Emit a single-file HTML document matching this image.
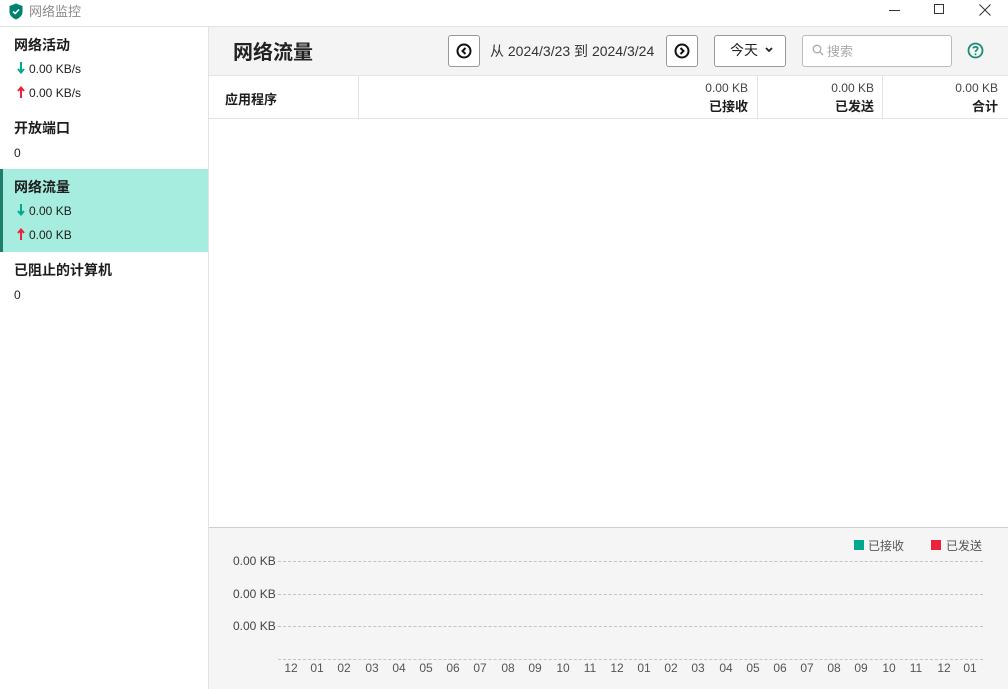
<!DOCTYPE html>
<html><head><meta charset="utf-8"><style>
*{margin:0;padding:0;box-sizing:border-box}
body{width:1008px;height:689px;overflow:hidden;background:#fff;font-family:"Liberation Sans","Noto Sans CJK SC",sans-serif;color:#1d1d1b;position:relative}
.a{position:absolute;white-space:nowrap}
.b{font-weight:bold;font-size:14px}
.s{font-size:12px}
.dn,.up{display:inline-block;width:8px;height:12px;vertical-align:-1px;margin-right:4px}
.dl{position:absolute;left:278px;width:705px;border-top:1px dashed #c4c4c4;height:0}
.xl{position:absolute;top:661px;font-size:12px;color:#555;width:30px;text-align:center}
.yl{position:absolute;left:233px;font-size:12px;color:#444}
</style></head><body>
<div class="a" style="left:0;top:0;width:1008px;height:27px;border-bottom:1px solid #e3e3e3"></div>
<svg class="a" style="left:9px;top:3px" width="14" height="17" viewBox="0 0 14 17"><path d="M7 0.5 L13.5 3 V9 C13.5 12.5 10.5 15 7 16.5 C3.5 15 0.5 12.5 0.5 9 V3 Z" fill="#00816b"/><path d="M4 8.5 L6.2 10.5 L10 6.5" stroke="#fff" stroke-width="1.6" fill="none"/></svg>
<div class="a" style="left:29px;top:1px;font-size:13px;color:#8a8a8a">网络监控</div>
<div class="a" style="left:889px;top:10px;width:11px;border-top:1px solid #333"></div>
<div class="a" style="left:934px;top:4px;width:10px;height:10px;border:1px solid #333"></div>
<svg class="a" style="left:979px;top:4px" width="12" height="12"><path d="M0.5 0.5L11.5 11.5M11.5 0.5L0.5 11.5" stroke="#333"/></svg>
<div class="a" style="left:208px;top:27px;width:1px;height:662px;background:#e3e3e3"></div>
<div class="a b" style="left:14px;top:35px">网络活动</div>
<div class="a s" style="left:17px;top:62px"><svg class="dn" viewBox="0 0 8 12"><path d="M4 0V10M1 7L4 10.5L7 7" stroke="#00a88e" stroke-width="2" fill="none"/></svg>0.00 KB/s</div>
<div class="a s" style="left:17px;top:86px"><svg class="up" viewBox="0 0 8 12"><path d="M4 12V2M1 5L4 1.5L7 5" stroke="#e8233b" stroke-width="2" fill="none"/></svg>0.00 KB/s</div>
<div class="a b" style="left:14px;top:118px">开放端口</div>
<div class="a s" style="left:14px;top:146px">0</div>
<div class="a" style="left:0;top:169px;width:208px;height:83px;background:#a6ecdf;border-left:3px solid #1f7d6b"></div>
<div class="a b" style="left:14px;top:177px">网络流量</div>
<div class="a s" style="left:17px;top:204px"><svg class="dn" viewBox="0 0 8 12"><path d="M4 0V10M1 7L4 10.5L7 7" stroke="#00a88e" stroke-width="2" fill="none"/></svg>0.00 KB</div>
<div class="a s" style="left:17px;top:228px"><svg class="up" viewBox="0 0 8 12"><path d="M4 12V2M1 5L4 1.5L7 5" stroke="#e8233b" stroke-width="2" fill="none"/></svg>0.00 KB</div>
<div class="a b" style="left:14px;top:260px">已阻止的计算机</div>
<div class="a s" style="left:14px;top:288px">0</div>
<div class="a" style="left:209px;top:27px;width:799px;height:49px;background:#f4f4f4;border-bottom:1px solid #e3e3e3"></div>
<div class="a" style="left:233px;top:36px;font-size:20px;font-weight:bold;color:#222">网络流量</div>
<div class="a" style="left:448px;top:35px;width:32px;height:32px;border:1px solid #999;border-radius:3px;background:#fff"></div>
<svg class="a" style="left:456px;top:43px" width="16" height="16"><circle cx="8" cy="8" r="6.5" fill="none" stroke="#111" stroke-width="2"/><path d="M9.5 5L6.5 8L9.5 11" stroke="#111" stroke-width="2" fill="none"/></svg>
<div class="a" style="left:490px;top:41px;font-size:14px;color:#333">从 2024/3/23 到 2024/3/24</div>
<div class="a" style="left:666px;top:35px;width:32px;height:32px;border:1px solid #999;border-radius:3px;background:#fff"></div>
<svg class="a" style="left:674px;top:43px" width="16" height="16"><circle cx="8" cy="8" r="6.5" fill="none" stroke="#111" stroke-width="2"/><path d="M6.5 5L9.5 8L6.5 11" stroke="#111" stroke-width="2" fill="none"/></svg>
<div class="a" style="left:714px;top:35px;width:72px;height:32px;border:1px solid #999;border-radius:3px;background:#fff"></div>
<div class="a" style="left:730px;top:40px;font-size:14px;color:#222">今天</div>
<svg class="a" style="left:765px;top:47px" width="8" height="6"><path d="M1 1L4 4L7 1" stroke="#222" stroke-width="1.8" fill="none"/></svg>
<div class="a" style="left:802px;top:35px;width:150px;height:32px;border:1px solid #bbb;border-radius:3px;background:#fff"></div>
<svg class="a" style="left:812px;top:44px" width="12" height="12"><circle cx="5" cy="5" r="3.8" fill="none" stroke="#aaa" stroke-width="1.3"/><path d="M7.8 7.8L11 11" stroke="#aaa" stroke-width="1.3"/></svg>
<div class="a" style="left:827px;top:41px;font-size:13px;color:#aaa">搜索</div>
<svg class="a" style="left:967px;top:42px" width="17" height="17"><circle cx="8.5" cy="8.5" r="7" fill="none" stroke="#1a8d74" stroke-width="1.8"/><path d="M6.3 6.5C6.3 4.3 10.7 4.3 10.7 6.5C10.7 8 8.5 8 8.5 10" stroke="#1a8d74" stroke-width="1.7" fill="none"/><circle cx="8.5" cy="12.3" r="1" fill="#1a8d74"/></svg>
<div class="a" style="left:209px;top:118px;width:799px;border-top:1px solid #e3e3e3"></div>
<div class="a" style="left:358px;top:76px;width:1px;height:42px;background:#e3e3e3"></div>
<div class="a" style="left:757px;top:76px;width:1px;height:42px;background:#e3e3e3"></div>
<div class="a" style="left:882px;top:76px;width:1px;height:42px;background:#e3e3e3"></div>
<div class="a" style="left:225px;top:89px;font-size:13px;font-weight:bold">应用程序</div>
<div class="a" style="right:260px;top:81px;font-size:12px;color:#444">0.00 KB</div>
<div class="a" style="right:260px;top:96px;font-size:13px;font-weight:bold">已接收</div>
<div class="a" style="right:134px;top:81px;font-size:12px;color:#444">0.00 KB</div>
<div class="a" style="right:134px;top:96px;font-size:13px;font-weight:bold">已发送</div>
<div class="a" style="right:10px;top:81px;font-size:12px;color:#444">0.00 KB</div>
<div class="a" style="right:10px;top:96px;font-size:13px;font-weight:bold">合计</div>
<div class="a" style="left:209px;top:527px;width:799px;height:162px;background:#f5f5f5;border-top:1px solid #d0d0d0"></div>
<div class="a" style="left:854px;top:540px;width:10px;height:10px;background:#00a88e"></div>
<div class="a" style="left:868px;top:537px;font-size:12px;color:#555">已接收</div>
<div class="a" style="left:931px;top:540px;width:10px;height:10px;background:#e8233b"></div>
<div class="a" style="left:946px;top:537px;font-size:12px;color:#555">已发送</div>
<div class="yl" style="top:554px">0.00 KB</div>
<div class="yl" style="top:587px">0.00 KB</div>
<div class="yl" style="top:619px">0.00 KB</div>
<div class="dl" style="top:561px"></div>
<div class="dl" style="top:594px"></div>
<div class="dl" style="top:626px"></div>
<div class="dl" style="top:659px"></div>
<div class="xl" style="left:276px">12</div><div class="xl" style="left:302px">01</div><div class="xl" style="left:329px">02</div><div class="xl" style="left:357px">03</div><div class="xl" style="left:384px">04</div><div class="xl" style="left:411px">05</div><div class="xl" style="left:438px">06</div><div class="xl" style="left:465px">07</div><div class="xl" style="left:493px">08</div><div class="xl" style="left:520px">09</div><div class="xl" style="left:548px">10</div><div class="xl" style="left:575px">11</div><div class="xl" style="left:602px">12</div><div class="xl" style="left:629px">01</div><div class="xl" style="left:656px">02</div><div class="xl" style="left:683px">03</div><div class="xl" style="left:711px">04</div><div class="xl" style="left:738px">05</div><div class="xl" style="left:765px">06</div><div class="xl" style="left:792px">07</div><div class="xl" style="left:819px">08</div><div class="xl" style="left:846px">09</div><div class="xl" style="left:874px">10</div><div class="xl" style="left:901px">11</div><div class="xl" style="left:929px">12</div><div class="xl" style="left:955px">01</div>
</body></html>
